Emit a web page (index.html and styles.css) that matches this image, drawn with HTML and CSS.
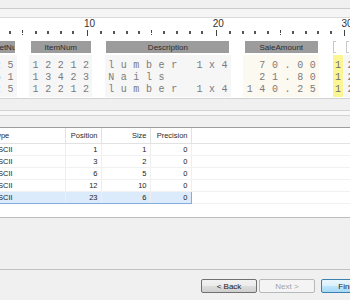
FILE: index.html
```html
<!DOCTYPE html>
<html lang="en">

<head>
    <meta charset="UTF-8">
    <title>Flat File Layout</title>
    <link rel="stylesheet" href="styles.css">
</head>

<body>
    <div class="bar"></div>
    <div class="bar inner"></div>

    <div class="sheet">
        <div class="ruler" id="ruler"></div>
        <div class="fields">
            <div class="field w1">
                <div class="head">RecType</div>
                <div class="cells">1
1
1</div>
            </div>
            <div class="field w1"></div>
            <div class="field w2">
                <div class="head">SheetNum</div>
                <div class="cells">25
51
25</div>
            </div>
            <div class="field w1"></div>
            <div class="field w5">
                <div class="head">ItemNum</div>
                <div class="cells">12212
13423
12212</div>
            </div>
            <div class="field w1"></div>
            <div class="field w10">
                <div class="head">Description</div>
                <div class="cells">lumber 1x4
Nails
lumber 1x4</div>
            </div>
            <div class="field w1"></div>
            <div class="field w6">
                <div class="head">SaleAmount</div>
                <div class="cells amount"> 70.00
 21.80
140.25</div>
            </div>
            <div class="field w1"></div>
            <div class="field w1">
                <div class="head stub"></div>
                <div class="cells marked">1
1
1</div>
            </div>
            <div class="field w1">
                <div class="head stub"></div>
                <div class="cells">2
2
2</div>
            </div>
        </div>
    </div>

    <div class="splitter"></div>

    <div class="list">
        <table>
            <colgroup>
                <col class="c-type">
                <col class="c-pos">
                <col class="c-size">
                <col class="c-prec">
                <col>
            </colgroup>
            <thead>
                <tr>
                    <th class="left">Type</th>
                    <th>Position</th>
                    <th>Size</th>
                    <th>Precision</th>
                    <th></th>
                </tr>
            </thead>
            <tbody>
                <tr><td class="left">ASCII</td><td>1</td><td>1</td><td>0</td><td></td></tr>
                <tr><td class="left">ASCII</td><td>3</td><td>2</td><td>0</td><td></td></tr>
                <tr><td class="left">ASCII</td><td>6</td><td>5</td><td>0</td><td></td></tr>
                <tr><td class="left">ASCII</td><td>12</td><td>10</td><td>0</td><td></td></tr>
                <tr class="sel"><td class="left">ASCII</td><td>23</td><td>6</td><td class="end">0</td><td></td></tr>
            </tbody>
        </table>
    </div>

    <div class="footer">
        <div class="buttons">
            <button class="back">&lt; Back</button>
            <button class="next" disabled>Next &gt;</button>
            <button class="finish">Finish</button>
        </div>
    </div>

    <script>
        const ruler = document.getElementById('ruler');

        for (let n = 1; n <= 32; n++) {
            const cell = document.createElement('div');
            cell.className = 'tick';
            if (n % 10 === 0) {
                cell.classList.add('major');
                cell.innerHTML = '<span>' + n + '</span>';
            } else if (n % 5 === 0) {
                cell.classList.add('half');
            }
            cell.appendChild(document.createElement('i'));
            ruler.appendChild(cell);
        }
    </script>
</body>

</html>
```

FILE: styles.css
```css
body {
    margin: 0;
    width: 350px;
    height: 300px;
    overflow: hidden;
    background-color: #f0f0f0;
    font-family: "Liberation Sans", Arial, sans-serif;
    color: #222;
}

.bar {
    height: 8px;
    border-bottom: 1px solid #cbcbcb;
}

.bar.inner {
    background-color: #f5f5f5;
    border-bottom-color: #dadada;
}

/* preview sheet */
.sheet {
    height: 80px;
    background: #fff;
    border-bottom: 1px solid #d2d2d2;
    overflow: hidden;
}

.ruler {
    display: flex;
    height: 20px;
    margin-left: -33.7px;
}

.tick {
    flex: 0 0 12.6px;
    display: flex;
    flex-direction: column;
    align-items: center;
}

.tick span {
    align-self: flex-start;
    padding-left: 4.3px;
    margin-top: 1px;
    font-size: 10px;
    line-height: 10px;
    white-space: nowrap;
    color: #333;
}

.tick i {
    margin-top: auto;
    margin-bottom: 4px;
    width: 2px;
    height: 3px;
    background-color: #555;
}

.tick.half i {
    width: 1px;
    height: 5px;
    margin-bottom: 3px;
    background: linear-gradient(#444 60%, transparent 60%, transparent 80%, #444 80%);
}

.tick.major i {
    width: 1px;
    height: 6px;
    margin-bottom: 2px;
    background-color: #444;
}

.fields {
    display: flex;
    margin-left: -33.7px;
    margin-top: 3px;
}

.field {
    flex: 0 0 auto;
    display: flex;
    flex-direction: column;
}

.w1 { width: 12.6px; }
.w2 { width: 25.2px; }
.w5 { width: 63px; }
.w6 { width: 75.6px; }
.w10 { width: 126px; }

.head {
    height: 12px;
    margin: 0 1.5px;
    background-color: #9c9c9c;
    display: flex;
    justify-content: center;
    align-items: center;
    overflow: hidden;
    font-size: 8px;
    white-space: nowrap;
    color: #2b2b2b;
}

.head.stub {
    width: 2px;
    height: 10px;
    margin: 0 0 0 1.5px;
    background: none;
    border: 1px solid #c8c8c8;
    border-right: none;
}

.cells {
    box-sizing: border-box;
    height: 42px;
    margin-top: 2px;
    padding-top: 5px;
    padding-left: 3.3px;
    background-color: #f6f6f6;
    font-family: "Liberation Mono", "Courier New", monospace;
    font-size: 10px;
    line-height: 12px;
    letter-spacing: 6.6px;
    white-space: pre;
    overflow: hidden;
    color: #7c7c7c;
}

.cells.amount {
    background-color: #fcf9f1;
}

.cells.marked {
    margin-left: 1px;
    margin-right: 1px;
    padding-left: 2.3px;
    background-color: #fbf693;
    color: #6e6e6e;
}

/* field list */
.splitter {
    height: 4px;
    margin: 11px 0;
    background-color: #f8f8f8;
    border-top: 1px solid #d3d3d3;
    border-bottom: 1px solid #d3d3d3;
}

.list {
    height: 89px;
    margin-left: -10px;
    background: #fff;
    border-top: 1px solid #9d9d9d;
    border-bottom: 1px solid #bdbdbd;
    overflow: hidden;
}

table {
    width: 420px;
    table-layout: fixed;
    border-collapse: collapse;
    font-size: 7.5px;
}

.c-type { width: 75px; }
.c-pos { width: 36px; }
.c-size { width: 49px; }
.c-prec { width: 41px; }

th {
    height: 15px;
    padding: 0 3px;
    font-weight: normal;
    text-align: right;
    color: #2b2b2b;
    border-right: 1px solid #e2e2e2;
    border-bottom: 1px solid #e2e2e2;
}

td {
    height: 11px;
    padding: 0 3px;
    line-height: 11px;
    text-align: right;
    border-right: 1px solid #efefef;
    border-bottom: 1px solid #f1f1f1;
}

th.left,
td.left {
    text-align: left;
}

tr.sel td {
    background-color: #dcebfc;
    border-top: 1px solid #84acdd;
    border-bottom: 1px solid #84acdd;
}

tr.sel td.end {
    border-right: 1px solid #84acdd;
}

tr.sel td:last-child {
    background: none;
    border-top-color: #f1f1f1;
    border-bottom-color: #f1f1f1;
}

/* wizard buttons */
.footer {
    margin-top: 51px;
    border-top: 1px solid #c3c3c3;
}

.buttons {
    display: flex;
    justify-content: flex-end;
    gap: 2px;
    margin-right: -27px;
    padding-top: 9px;
}

button {
    width: 56px;
    height: 14px;
    padding: 0;
    font-family: "Liberation Sans", Arial, sans-serif;
    font-size: 8px;
    color: #222;
    border: 1px solid #707070;
    border-radius: 2px;
    background: linear-gradient(#f2f2f2, #ebebeb 50%, #dddddd 50%, #cfcfcf);
}

button.next {
    margin-right: 4px;
    color: #a3a3a3;
    border-color: #b5b9bc;
    background: #f4f4f4;
}

button.finish {
    border-color: #3c7fb1;
    background: linear-gradient(#eaf6fd, #d9f0fc 50%, #bee6fd 50%, #a7d9f5);
}
```
